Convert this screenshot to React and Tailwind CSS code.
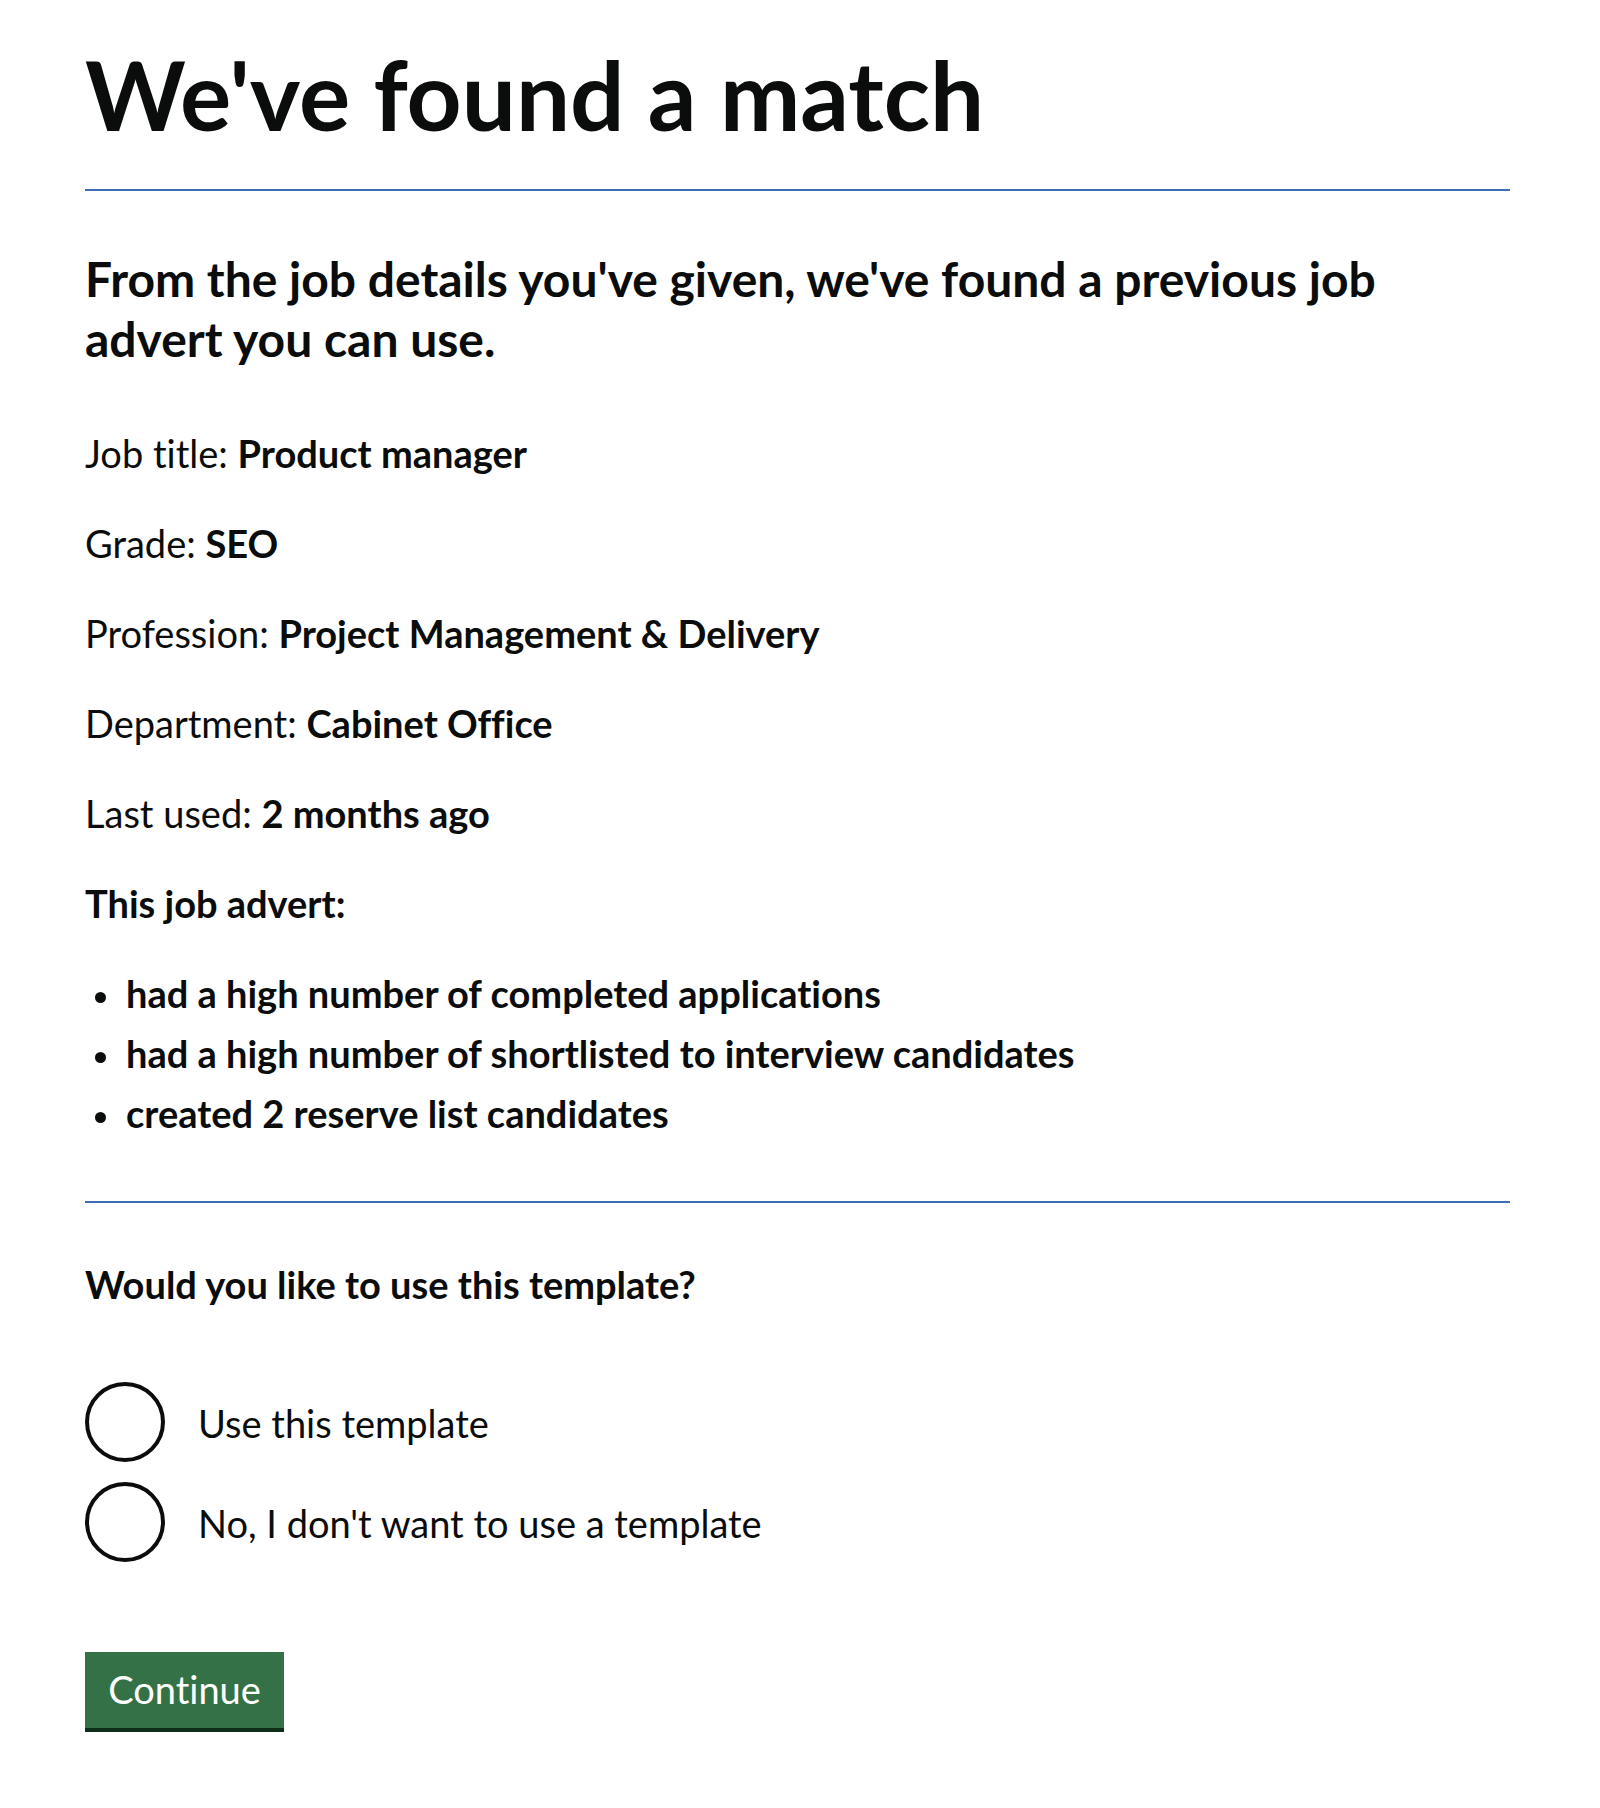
import React from "react";

const details = [
  { label: "Job title:", value: "Product manager" },
  { label: "Grade:", value: "SEO" },
  { label: "Profession:", value: "Project Management & Delivery" },
  { label: "Department:", value: "Cabinet Office" },
  { label: "Last used:", value: "2 months ago" },
];

const points = [
  "had a high number of completed applications",
  "had a high number of shortlisted to interview candidates",
  "created 2 reserve list candidates",
];

const options = ["Use this template", "No, I don't want to use a template"];

export default function App() {
  return (
    <div className="min-h-[1808px] bg-white text-[#0b0c0c] font-['Lato',sans-serif] [font-variant-ligatures:none]">
      <div className="ml-[85px] w-[1425px] pt-[44px] pb-[60px]">
        <h1 className="text-[96px] leading-[100px] font-bold">We've found a match</h1>

        <hr className="mt-[45px] border-0 border-t-2 border-[#3e6fb4]" />

        <h2 className="mt-[58px] max-w-[1340px] text-[48px] leading-[60px] font-bold">
          From the job details you've given, we've found a previous job advert you can use.
        </h2>

        <div className="mt-[59px] text-[38px] leading-[50px]">
          {details.map((d) => (
            <p key={d.label} className="mb-[40px]">
              {d.label} <span className="font-bold">{d.value}</span>
            </p>
          ))}
          <p className="mb-[40px] font-bold">This job advert:</p>
          <ul className="font-bold">
            {points.map((p) => (
              <li key={p} className="flex mb-[10px] last:mb-0">
                <span className="w-[41px] shrink-0">
                  <span className="block ml-[10px] mt-[24px] w-[11px] h-[11px] rounded-full bg-[#0b0c0c]" />
                </span>
                <span>{p}</span>
              </li>
            ))}
          </ul>
        </div>

        <hr className="mt-[63px] border-0 border-t-2 border-[#3e6fb4]" />

        <fieldset className="mt-[56px]">
          <legend className="text-[38px] leading-[50px] font-bold">
            Would you like to use this template?
          </legend>
          <div className="mt-[73px]">
            {options.map((o) => (
              <label key={o} className="flex items-start mb-[20px] last:mb-0 cursor-pointer">
                <span className="w-[80px] h-[80px] shrink-0 rounded-full border-4 border-[#0b0c0c]" />
                <span className="ml-[33px] pt-[16px] text-[38px] leading-[50px]">{o}</span>
              </label>
            ))}
          </div>
        </fieldset>

        <button className="mt-[90px] block w-[199px] h-[76px] border-4 border-transparent bg-[#357146] pt-[14px] pb-[16px] text-center text-[38px] leading-[38px] text-white shadow-[0_4px_0_#0f2e19]">
          Continue
        </button>
      </div>
    </div>
  );
}
